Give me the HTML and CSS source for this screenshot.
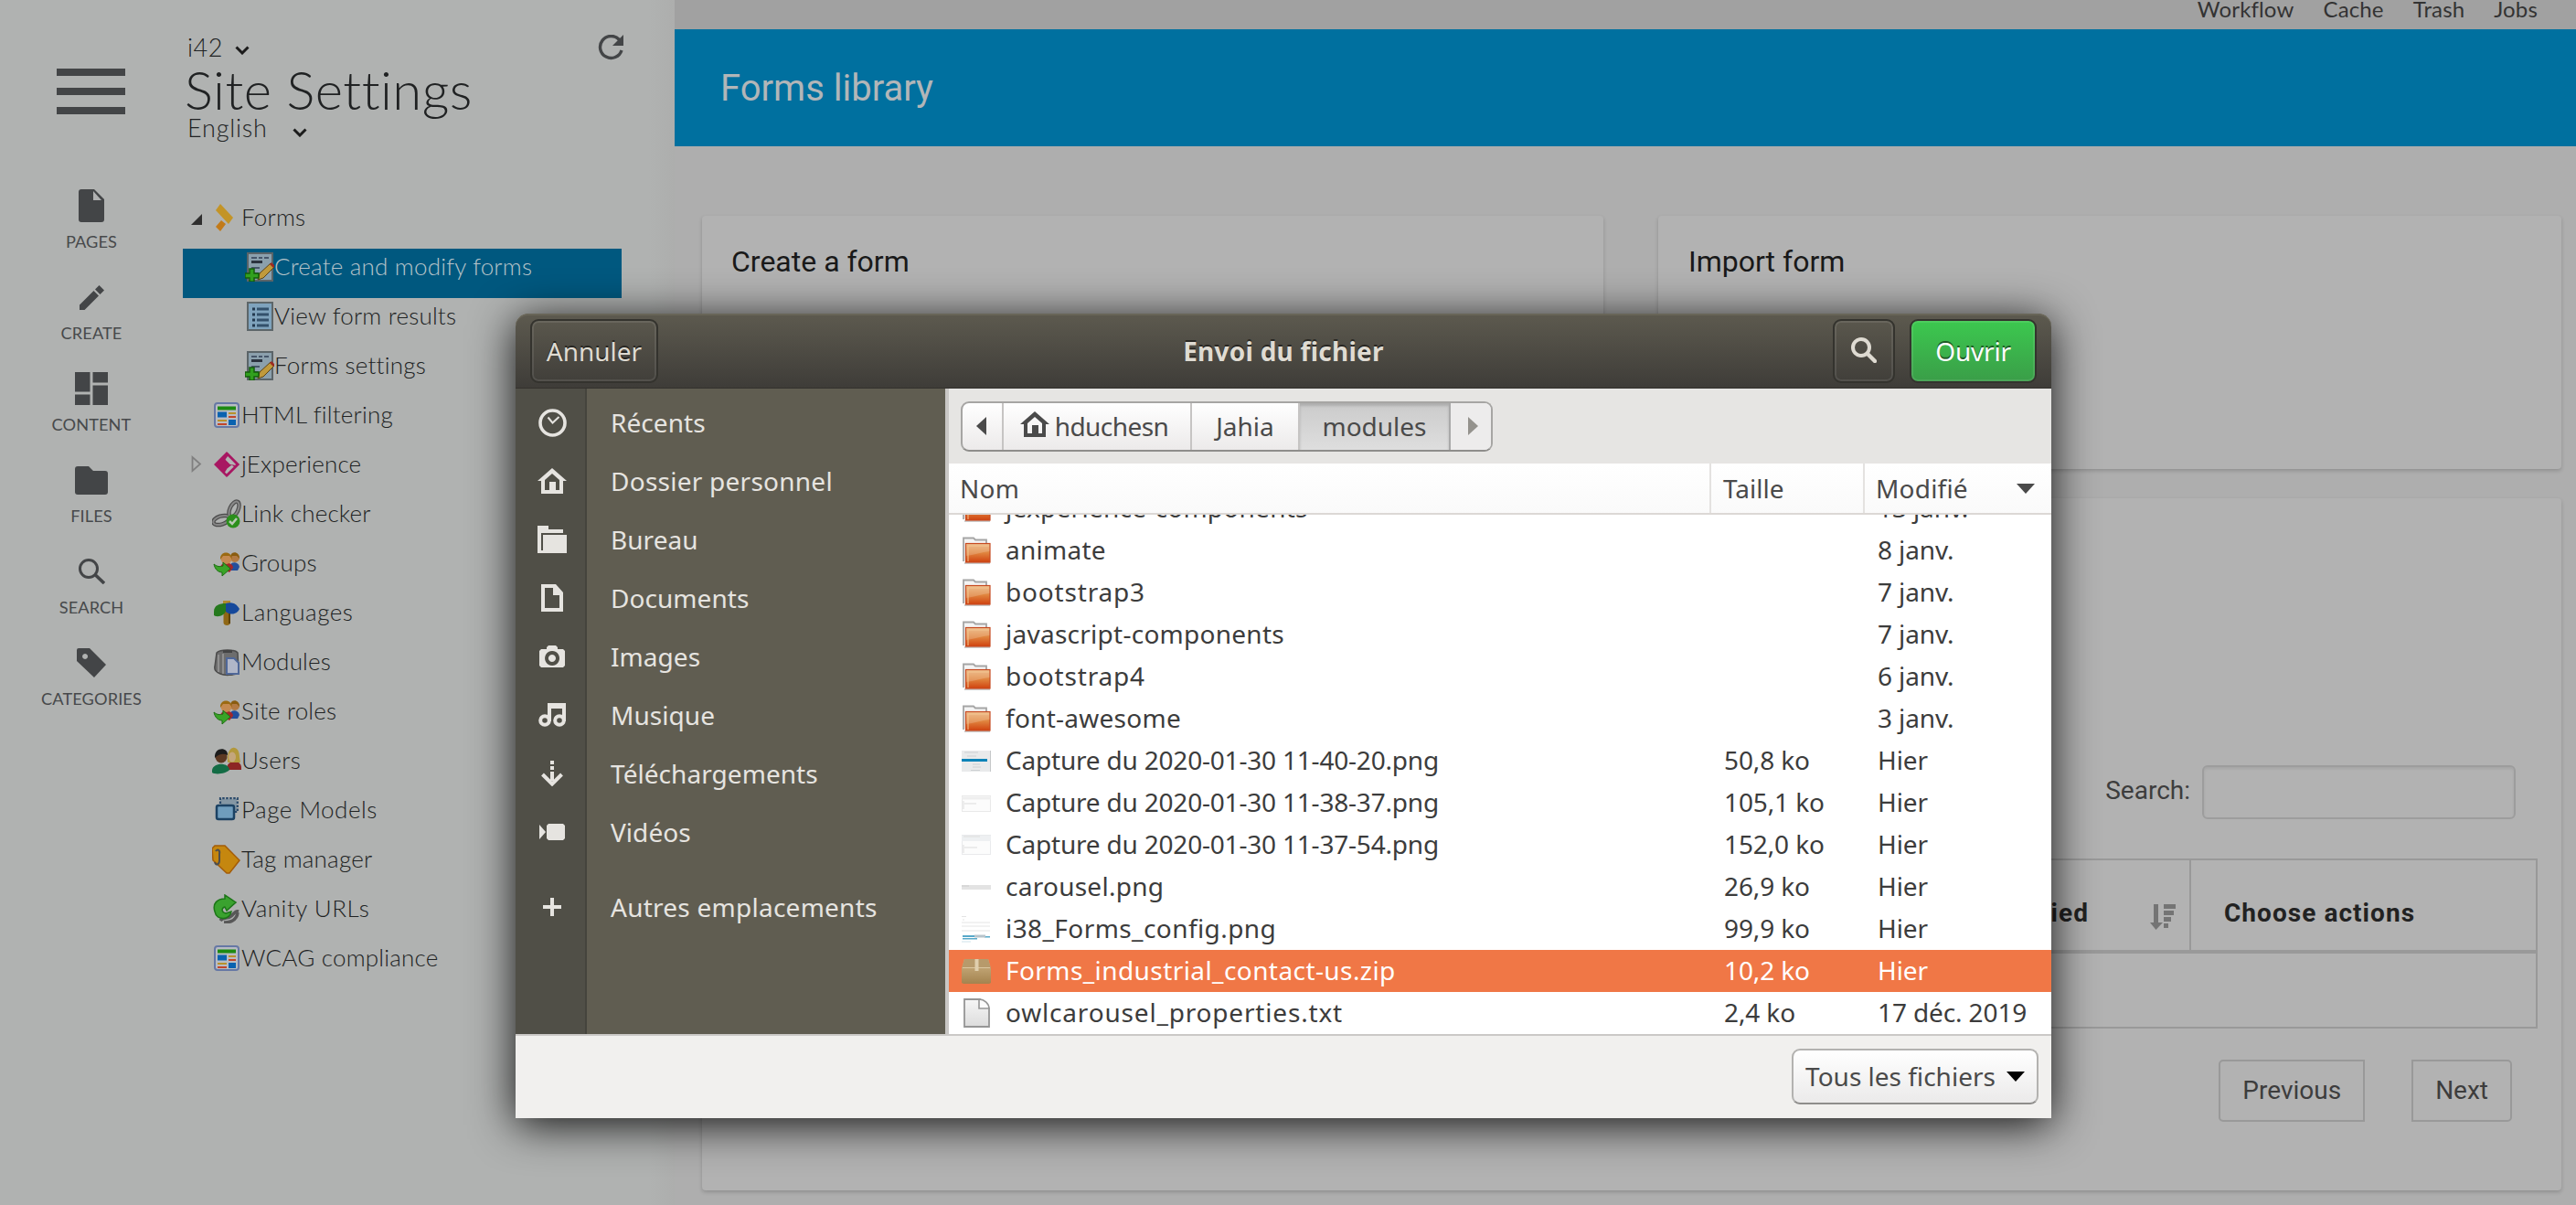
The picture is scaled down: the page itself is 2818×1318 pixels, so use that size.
FILE: index.html
```html
<!DOCTYPE html>
<html lang="en">
<head>
<meta charset="utf-8">
<title>Forms library</title>
<link rel="stylesheet" href="styles.css">
</head>
<body>
<svg class="defs" aria-hidden="true">
  <defs>
    <linearGradient id="g-folder" x1="0" y1="0" x2="0" y2="1"><stop offset="0" stop-color="#e9ae72"/><stop offset=".5" stop-color="#e0853f"/><stop offset="1" stop-color="#d0420f"/></linearGradient>
    <linearGradient id="g-box" x1="0" y1="0" x2="0" y2="1"><stop offset="0" stop-color="#cfb486"/><stop offset="1" stop-color="#a3834f"/></linearGradient>
    <linearGradient id="g-doc" x1="0" y1="0" x2="0" y2="1"><stop offset="0" stop-color="#f6f6f6"/><stop offset="1" stop-color="#dcdcdc"/></linearGradient>
  </defs>
  <symbol id="form-edit" viewBox="0 0 32 32">
    <rect x="3" y="1" width="27" height="30" fill="#8ba0ad" stroke="#5b6468" stroke-width="2"/>
    <path d="M7 6h6M15 6h4M21 6h5M7 17h9M9 23h6" stroke="#46566a" stroke-width="2"/>
    <path d="M7 10.500h12" stroke="#2c3440" stroke-width="3"/>
    <path d="M14 30l2-7L28 12l4 4-12 12z" fill="#c09a3c" stroke="#5d4415"/>
    <path d="M27 13l2-2 4 4-2 2z" fill="#9c2b22"/>
    <path d="M5 18h5v5h5v5h-5v4H5v-4H0v-5h5z" fill="#31a01e" stroke="#145c0c" stroke-width="1.500"/>
  </symbol>
  <symbol id="form-list" viewBox="0 0 32 32">
    <rect x="3" y="1" width="27" height="30" fill="#7fa3bd" stroke="#5d6669" stroke-width="2"/>
    <path d="M13 8h13M13 14h13M13 20h13M13 26h13" stroke="#33506b" stroke-width="3"/>
    <path d="M8 8h3M8 14h3M8 20h3M8 26h3" stroke="#23394f" stroke-width="3"/>
  </symbol>
  <symbol id="layout" viewBox="0 0 32 32">
    <rect x="3" y="3" width="26" height="26" rx="3" fill="#b9bcc3" stroke="#6678a5" stroke-width="2"/>
    <path d="M6 8.500h20" stroke="#1d8a12" stroke-width="4"/>
    <path d="M6 12.500h10v6H6zM18 21h8v6h-8z" fill="#0a62b0"/>
    <path d="M18 14h8M6 22h10" stroke="#b8922c" stroke-width="2"/>
    <path d="M18 18h8M6 26h10" stroke="#c1462a" stroke-width="2"/>
  </symbol>
  <symbol id="jexp" viewBox="0 0 32 32">
    <path fill-rule="evenodd" d="M16 2l14 14-14 14L2 16zM17.500 6.500l-3 4 5 5 6 1.500 1-1zM16.500 20.500l-2.500 4 2.500 2.500 8-8-3-2.500z" fill="#a81762"/>
    <path d="M18 7.500l-3 3.500 5 5 5 0zM17 20.500l-2 3.500 2 2 6.500-7-2-1.500z" fill="#b3b3b3"/>
    <path d="M16 4l12 12-12 12" fill="none" stroke="#a81762" stroke-width="2.500"/>
  </symbol>
  <symbol id="link" viewBox="0 0 32 32">
    <ellipse cx="10" cy="23" rx="9" ry="4.500" fill="none" stroke="#4c4c4c" stroke-width="4.500" transform="rotate(-18 10 23)"/>
    <ellipse cx="24" cy="11" rx="9" ry="4.500" fill="none" stroke="#505050" stroke-width="4.500" transform="rotate(-65 24 11)"/>
    <ellipse cx="10" cy="23" rx="9" ry="4.500" fill="none" stroke="#858585" stroke-width="2" transform="rotate(-18 10 23)"/>
    <ellipse cx="24" cy="11" rx="9" ry="4.500" fill="none" stroke="#898989" stroke-width="2" transform="rotate(-65 24 11)"/>
    <circle cx="23" cy="24" r="7.500" fill="#2b8f1c"/>
    <path d="M19 24l3 3 5-6" fill="none" stroke="#b9c9b5" stroke-width="2.500"/>
  </symbol>
  <symbol id="people" viewBox="0 0 32 32">
    <path d="M20 19c0-5 9-5 10 1l-2 4h-8z" fill="#234f9c"/>
    <circle cx="25" cy="10" r="5" fill="#b37a43"/><path d="M20 11c-1-9 10-9 10 0l-3-3h-5z" fill="#8a5d10"/>
    <path d="M9 21c0-7 14-7 14 0l-4 5z" fill="#a3282a"/>
    <circle cx="15.500" cy="11" r="6" fill="#c58a50"/><path d="M9 12c-1-10 13-10 13 0l-3-4h-7z" fill="#9b6a12"/>
    <path d="M2 17c4 3 6 3 10 2v-4l8 7-9 8v-4c-5 0-8-4-9-9z" fill="#39a427" stroke="#1d6d12"/>
  </symbol>
  <symbol id="signs" viewBox="0 0 32 32">
    <path d="M12 3h8v4h-8z" fill="#b08a2c"/><path d="M12.500 12h7.500v15c0 4-7.500 4-7.500 0z" fill="#8f6715"/><path d="M18 13h2v15h-2z" fill="#5f430b"/>
    <path d="M2 15c0-7 6-9 13-9v8c-1 5-9 8-13 5z" fill="#25791d"/>
    <path d="M15 6c8-2 12 1 15 6-2 5-9 8-15 3z" fill="#16499b"/>
  </symbol>
  <symbol id="module" viewBox="0 0 32 32">
    <path d="M5 6c4-4 20-4 23 0l1 22c-6 3-16 3-20 1-5-2-7-4-6-8z" fill="#6d6d6d" stroke="#4c4c4c" stroke-width="1.500"/>
    <path d="M7 8v19M12 7v22" stroke="#8f8f8f" stroke-width="2"/>
    <path d="M12 3h10v3H12z" fill="#444"/>
    <path d="M16 12h8l5 5v12H16z" fill="#b0b6c8" stroke="#4f6798" stroke-width="2"/>
  </symbol>
  <symbol id="users" viewBox="0 0 32 32">
    <path d="M16 24c1-9 15-10 16-1v3H18z" fill="#8d2524"/>
    <path d="M17 18c-2-20 13-21 13-6l1 6z" fill="#b2983c"/><ellipse cx="22" cy="12" rx="4" ry="5.500" fill="#c4a67c"/>
    <path d="M0 28c-1-10 18-11 19-2-3 4-15 6-19 3z" fill="#136c45"/>
    <circle cx="10" cy="12" r="6.500" fill="#5b3822"/><path d="M3 13c-1-13 15-12 14-3-4-2-9-2-14 3z" fill="#1c1c1c"/>
  </symbol>
  <symbol id="windows" viewBox="0 0 32 32">
    <path d="M9 4h18v15H9z" fill="#8597a4"/>
    <path d="M9 9V3.200h18.800v14.800h-3" fill="none" stroke="#29496a" stroke-width="2.200" stroke-dasharray="2.500 1.500"/>
    <rect x="5" y="11" width="19" height="15" rx="2" fill="#6f9dbd" stroke="#1c4263" stroke-width="2.500"/>
  </symbol>
  <symbol id="tag" viewBox="0 0 32 32">
    <path d="M0 4l3-3h11l16 16-11 14h-3L1 17z" fill="#c5870f" stroke="#a35c09" stroke-width="1.500"/>
    <path d="M4 7c2-3 5-1 4 3v7c0 5-4 6-5 2" fill="none" stroke="#4d4d4d" stroke-width="2"/>
  </symbol>
  <symbol id="vanity" viewBox="0 0 32 32">
    <path d="M13 31c6 0 14-2 15-11M9 29c4-5 8-1 12-5s5-6 8-5" fill="none" stroke="#585858" stroke-width="3.500"/>
    <path d="M14 5V1l12 8-10 9-2-4c-4 1-4 6 1 7l6-2c-1 9-16 11-18 0C0 10 6 5 14 5z" fill="#3aa22f" stroke="#1c7518" stroke-width="1.500"/>
  </symbol>
  <symbol id="forms" viewBox="0 0 32 32">
    <path d="M7 8l5-7 14 15-5 7z" fill="#c39427"/><path d="M7 26l6-7 5 4-6 8z" fill="#c27a18"/>
  </symbol>
  <symbol id="folder" viewBox="0 0 32 32">
    <path d="M2 28V2.500h11l2 2h12v5" fill="#f4f4f4" stroke="#a5a5a5" stroke-width="1.800"/>
    <path d="M3 30h28" stroke="#bbb" stroke-width="1.500"/>
    <rect x="4.500" y="8.500" width="26.500" height="20.500" fill="url(#g-folder)" stroke="#c74a20" stroke-width="1.200"/>
    <path d="M5 9h25.500v8C22 18 13 21 5 22z" fill="#fff" opacity=".18"/>
    <path d="M7 28V11h23" fill="none" stroke="#f3c48f" stroke-width="1"/>
  </symbol>
  <symbol id="home" viewBox="0 0 32 28">
    <path d="M16 0L0 14h4v14h24V14h4zM16 6l8 7v11h-4v-9h-7v9H8V13z" fill="currentColor" fill-rule="evenodd"/>
  </symbol>
  <symbol id="loupe" viewBox="0 0 28 28">
    <circle cx="11" cy="11" r="9" fill="none" stroke="currentColor" stroke-width="4"/><path d="M18 18l8 8" stroke="currentColor" stroke-width="4.500" stroke-linecap="round"/>
  </symbol>
</svg>

<div class="app">
  <nav class="rail">
    <div class="burger"><i></i><i></i><i></i></div>
    <ul class="rail-list">
      <li><span class="rail-icon"><svg width="28" height="36" viewBox="0 0 28 36"><path d="M3 0h14l11 11v22a3 3 0 0 1-3 3H3a3 3 0 0 1-3-3V3a3 3 0 0 1 3-3z"/><path d="M16 2v10h9z" fill="#b0b1b1"/></svg></span>PAGES</li>
      <li><span class="rail-icon"><svg width="27" height="27" viewBox="0 0 27 27"><path d="M0 21.500L15.500 6l5.500 5.500L5.500 27H0zM17 4.500L21.500 0 27 5.500 22.500 10z"/></svg></span>CREATE</li>
      <li><span class="rail-icon"><svg width="36" height="36" viewBox="0 0 36 36"><path d="M0 0h16.500v21.500H0zM0 24.500h16.500V36H0zM19.500 0H36v11.500H19.500zM19.500 14.500H36V36H19.500z"/></svg></span>CONTENT</li>
      <li><span class="rail-icon"><svg width="36" height="31" viewBox="0 0 36 31"><path d="M3 0h12l5 5h13a3 3 0 0 1 3 3v20a3 3 0 0 1-3 3H3a3 3 0 0 1-3-3V3a3 3 0 0 1 3-3z"/></svg></span>FILES</li>
      <li><span class="rail-icon"><svg width="29" height="28" viewBox="0 0 29 28"><circle cx="11" cy="11" r="9.500" fill="none" stroke="#434547" stroke-width="3"/><path d="M18 17.500l10 9.500" stroke="#434547" stroke-width="3.600"/></svg></span>SEARCH</li>
      <li><span class="rail-icon"><svg width="32" height="32" viewBox="0 0 32 32"><path fill-rule="evenodd" d="M2 0h12l18 18-13 14L0 14V2a2 2 0 0 1 2-2zM9 6a3 3 0 1 0 .1 0z"/></svg></span>CATEGORIES</li>
    </ul>
  </nav>

  <aside class="side">
    <header class="site">
      <div class="site-name">i42 <svg width="16" height="10" viewBox="0 0 16 10"><path d="M1.500 1.500L8 8l6.500-6.500"/></svg></div>
      <h1>Site Settings</h1>
      <div class="site-lang">English <svg width="16" height="10" viewBox="0 0 16 10"><path d="M1.500 1.500L8 8l6.500-6.500"/></svg></div>
      <svg class="refresh" width="28" height="28" viewBox="0 0 28 28"><path d="M23.500 5.500A12 12 0 1 0 26 17" fill="none" stroke="#434547" stroke-width="3.400"/><path d="M28 0v12H16z" fill="#434547"/></svg>
    </header>
    <ul class="tree">
      <li class="first"><svg class="twist open" width="12" height="12" viewBox="0 0 12 12"><path d="M12 0v12H0z" fill="#2f2f2f"/></svg><svg class="ico"><use href="#forms"/></svg>Forms</li>
      <li class="sub on"><svg class="ico"><use href="#form-edit"/></svg>Create and modify forms</li>
      <li class="sub"><svg class="ico"><use href="#form-list"/></svg>View form results</li>
      <li class="sub"><svg class="ico"><use href="#form-edit"/></svg>Forms settings</li>
      <li><svg class="ico"><use href="#layout"/></svg>HTML filtering</li>
      <li><svg class="twist" width="12" height="19" viewBox="0 0 12 19"><path d="M1.500 2v15L10 9.500z" fill="none" stroke="#808080" stroke-width="1.800"/></svg><svg class="ico"><use href="#jexp"/></svg>jExperience</li>
      <li><svg class="ico"><use href="#link"/></svg>Link checker</li>
      <li><svg class="ico"><use href="#people"/></svg>Groups</li>
      <li class="roomy"><svg class="ico"><use href="#signs"/></svg>Languages</li>
      <li><svg class="ico"><use href="#module"/></svg>Modules</li>
      <li><svg class="ico"><use href="#people"/></svg>Site roles</li>
      <li class="roomy"><svg class="ico"><use href="#users"/></svg>Users</li>
      <li class="roomy"><svg class="ico"><use href="#windows"/></svg>Page Models</li>
      <li><svg class="ico"><use href="#tag"/></svg>Tag manager</li>
      <li class="roomy"><svg class="ico"><use href="#vanity"/></svg>Vanity URLs</li>
      <li><svg class="ico"><use href="#layout"/></svg>WCAG compliance</li>
    </ul>
  </aside>

  <main class="main">
    <nav class="topbar"><span>Workflow</span><span>Cache</span><span>Trash</span><span>Jobs</span></nav>
    <header class="banner">Forms library</header>
    <div class="cards">
      <section class="card"><h2>Create a form</h2></section>
      <section class="card"><h2>Import form</h2></section>
    </div>
    <section class="card library">
      <div class="search"><label for="q">Search:</label><input id="q" type="text"></div>
      <div class="grid">
        <div class="th modified"><span>Last modified</span><svg width="28" height="28" viewBox="0 0 28 28"><path d="M4 0h5v20h5l-7.500 8L0 20h4zM15 0h13v5H15zM15 7h11v5H15zM15 14h8v5h-8zM15 21h5v5h-5z" fill="#747474"/></svg></div>
        <div class="th">Choose actions</div>
        <div class="td"></div>
      </div>
      <div class="pager"><span class="prev">Previous</span><span class="next">Next</span></div>
    </section>
  </main>
</div>

<div class="dialog" lang="fr">
  <header class="titlebar">
    <div class="left"><span class="btn cancel">Annuler</span></div>
    <h2>Envoi du fichier</h2>
    <div class="right"><span class="btn find"><svg width="28" height="28"><use href="#loupe"/></svg></span><span class="btn open-btn">Ouvrir</span></div>
  </header>
  <div class="panes">
    <ul class="places">
      <li><span><svg width="31" height="31" viewBox="0 0 31 31"><circle cx="15.500" cy="15.500" r="13.500" fill="none" stroke="currentColor" stroke-width="3.600"/><path d="M10.500 9.500l5 6 7-6.500" fill="none" stroke="currentColor" stroke-width="2"/></svg></span>Récents</li>
      <li class="mid"><span><svg width="32" height="28"><use href="#home"/></svg></span>Dossier personnel</li>
      <li><span><svg width="32" height="30" viewBox="0 0 32 30"><path d="M0 30V0h12v4h16v4H4v19h2V10h26v20z" fill="currentColor"/></svg></span>Bureau</li>
      <li><span><svg width="24" height="30" viewBox="0 0 24 30"><path d="M0 0h16l8 9v21H0zM4 4v22h16V12h-7V4z" fill="currentColor" fill-rule="evenodd"/></svg></span>Documents</li>
      <li><span><svg width="28" height="24" viewBox="0 0 28 24"><path fill-rule="evenodd" fill="currentColor" d="M2 4h6V2l2-2h8l2 2v2h6l2 2v16l-2 2H2l-2-2V6zM14 6a8 8 0 1 0 .1 0zM14 10a4 4 0 1 1-.1 0z"/></svg></span>Images</li>
      <li><span><svg width="30" height="26" viewBox="0 0 30 26"><path d="M12 20V2h16v18M12 4h16" fill="none" stroke="currentColor" stroke-width="4"/><circle cx="7" cy="19" r="4.800" fill="none" stroke="currentColor" stroke-width="4"/><circle cx="23" cy="19" r="4.800" fill="none" stroke="currentColor" stroke-width="4"/></svg></span>Musique</li>
      <li><span><svg width="24" height="28" viewBox="0 0 24 28"><path d="M12 0v4M12 6v4M12 12v10" stroke="currentColor" stroke-width="4"/><path d="M1.500 15L12 25.500 22.500 15" fill="none" stroke="currentColor" stroke-width="4"/></svg></span>Téléchargements</li>
      <li><span><svg width="28" height="18" viewBox="0 0 28 18"><path d="M0 1l7 8-7 8zM10 0h16l2 2v14l-2 2H10l-2-2V2z" fill="currentColor"/></svg></span>Vidéos</li>
      <li class="mid other"><span><svg width="20" height="20" viewBox="0 0 20 20"><path d="M8 0h4v8h8v4h-8v8H8v-8H0V8h8z" fill="currentColor"/></svg></span>Autres emplacements</li>
    </ul>
    <section class="browser">
      <div class="pathbar">
        <div class="crumbs">
          <span class="step back"><svg width="11" height="20" viewBox="0 0 11 20"><path d="M11 0v20L0 10z" fill="#4a4a4a"/></svg></span>
          <span class="step user"><svg width="32" height="28"><use href="#home"/></svg>hduchesn</span>
          <span class="step jahia">Jahia</span>
          <span class="step current">modules</span>
          <span class="step fwd"><svg width="11" height="20" viewBox="0 0 11 20"><path d="M0 0v20l11-10z" fill="#94928d"/></svg></span>
        </div>
      </div>
      <div class="row head"><span>Nom</span><span>Taille</span><span class="mod">Modifié<svg width="20" height="11" viewBox="0 0 20 11"><path d="M0 0h20L10 11z" fill="#4a4a4a"/></svg></span></div>
      <div class="files">
        <div class="row"><span><svg class="ico"><use href="#folder"/></svg>jexperience-components</span><span></span><span>13 janv.</span></div>
        <div class="row"><span><svg class="ico"><use href="#folder"/></svg>animate</span><span></span><span>8 janv.</span></div>
        <div class="row"><span class="wide"><svg class="ico"><use href="#folder"/></svg>bootstrap3</span><span></span><span>7 janv.</span></div>
        <div class="row"><span><svg class="ico"><use href="#folder"/></svg>javascript-components</span><span></span><span>7 janv.</span></div>
        <div class="row"><span class="wide"><svg class="ico"><use href="#folder"/></svg>bootstrap4</span><span></span><span>6 janv.</span></div>
        <div class="row"><span><svg class="ico"><use href="#folder"/></svg>font-awesome</span><span></span><span>3 janv.</span></div>
        <div class="row"><span class="tight"><svg class="ico" viewBox="0 0 32 32"><rect y="5" width="32" height="23" fill="#e9eaeb"/><path d="M31.500 5v23" stroke="#c5c7c9"/><rect y="14" width="28" height="3" fill="#0d83b8"/><path d="M3 7h15M6 11h10M12 20h8M12 23h9M10 26.500h10" stroke="#cdd0d2"/></svg>Capture du 2020-01-30 11-40-20.png</span><span>50,8 ko</span><span>Hier</span></div>
        <div class="row"><span class="tight"><svg class="ico" viewBox="0 0 32 32"><rect x=".5" y="8.500" width="31" height="17" fill="#fcfcfc" stroke="#e9e9e9"/><path d="M0 11h32" stroke="#eee" stroke-width="3"/><path d="M2 14v9M3 17h13" stroke="#ddd"/></svg>Capture du 2020-01-30 11-38-37.png</span><span>105,1 ko</span><span>Hier</span></div>
        <div class="row"><span class="tight"><svg class="ico" viewBox="0 0 32 32"><rect x=".5" y="5.500" width="31" height="21" fill="#fcfcfc" stroke="#e9eaec"/><path d="M0 9h32" stroke="#eef0f2" stroke-width="6"/><path d="M2 7h18M2 16v9M3 19h14" stroke="#ddd"/></svg>Capture du 2020-01-30 11-37-54.png</span><span>152,0 ko</span><span>Hier</span></div>
        <div class="row"><span><svg class="ico" viewBox="0 0 32 32"><rect y="14" width="32" height="5" fill="#e3e3e3"/><path d="M0 15h8" stroke="#ccc"/></svg>carousel.png</span><span>26,9 ko</span><span>Hier</span></div>
        <div class="row"><span class="loose"><svg class="ico" viewBox="0 0 32 32"><path d="M0 2.500h5M1 6h2M0 9h31M0 13h31M0 18h31" stroke="#e4e4e4"/><path d="M1 23h15v2H1zM1 26h16v1.500H1zM25 24h6v1.500h-6z" fill="#58a9c9"/><path d="M14 22.500h12v3H14z" fill="#b7c4cb"/><path d="M0 30h10" stroke="#cfe2ea"/></svg>i38_Forms_config.png</span><span>99,9 ko</span><span>Hier</span></div>
        <div class="row picked"><span class="loose"><svg class="ico" viewBox="0 0 32 32"><path d="M3 3h26l3 10v16l-2 1H2l-2-1V13z" fill="url(#g-box)"/><path d="M3 3h26l2.500 9H.5z" fill="#b79a6b"/><path d="M1 12.500h30" stroke="#dcc7a0"/><path d="M14.500 3h4v13h-4z" fill="#e0cfae"/></svg>Forms_industrial_contact-us.zip</span><span>10,2 ko</span><span>Hier</span></div>
        <div class="row"><span class="wide"><svg class="ico" viewBox="0 0 32 32"><path d="M3 1h17l10 10v20H3z" fill="url(#g-doc)" stroke="#969696" stroke-width="1.800"/><path d="M19 1v10h11c0-5-5-10-11-10z" fill="#fbfbfb" stroke="#969696" stroke-width="1.600"/></svg>owlcarousel_properties.txt</span><span>2,4 ko</span><span>17 déc. 2019</span></div>
      </div>
    </section>
  </div>
  <footer class="dialog-foot"><span class="filter">Tous les fichiers<svg width="20" height="11" viewBox="0 0 20 11"><path d="M0 0h20L10 11z"/></svg></span></footer>
</div>
</body>
</html>
```
FILE: styles.css
```css
* { box-sizing: border-box; }
body { margin: 0; width: 2818px; height: 1318px; overflow: hidden; background: #aeaeae; }
ul { list-style: none; margin: 0; padding: 0; }
h1, h2 { margin: 0; font-weight: 400; }
svg { display: block; flex: none; }
.defs { position: absolute; width: 0; height: 0; }
.ico { width: 32px; height: 32px; }

.app { display: flex; height: 1318px; }

/* Icon rail */
.rail { width: 200px; background: #b0b2b1; padding-top: 75px; }
.burger { display: flex; flex-direction: column; justify-content: space-between; width: 75px; height: 50px; margin-left: 62px; }
.burger i { height: 8px; background: #434547; }
.rail-list { margin-top: 75px; }
.rail-list li { height: 100px; display: flex; flex-direction: column; align-items: center; font: 18.200px/28px Lato, sans-serif; letter-spacing: .1px; color: #47494b; }
.rail-icon { height: 50px; display: flex; align-items: center; }
.rail-icon svg { fill: #434547; }

/* Site tree */
.side { width: 538px; background: linear-gradient(to right, #b0b2b1 510px, #adaead); font-family: Lato, sans-serif; font-weight: 300; color: #202223; }
.site { display: grid; grid-template-columns: 452px auto; justify-content: start; padding: 36px 0 0 2px; height: 218px; align-content: start; }
.site > * { grid-column: 1; }
.site-name, .site-lang { display: flex; align-items: center; font-size: 27px; padding-left: 3px; }
.site-name { line-height: 34px; height: 32px; gap: 13px; letter-spacing: .5px; }
.site-name svg { margin-top: 6px; }
.site-lang { line-height: 26px; letter-spacing: .8px; gap: 27px; }
.site-lang svg { margin-top: 10px; }
.site-name path, .site-lang path { fill: none; stroke: #1c1c1c; stroke-width: 3; }
.site h1 { font-size: 58px; line-height: 59px; font-weight: 300; letter-spacing: .45px; }
.site .refresh { grid-column: 2; grid-row: 1; margin-top: 2px; }
.tree li { height: 54px; width: 480px; padding-left: 32px; display: flex; align-items: flex-start; font-size: 26px; line-height: 38px; letter-spacing: .2px; white-space: nowrap; }
.tree li.sub { padding-left: 68px; }
.tree li.first { padding-left: 29px; }
.tree li.on { background: #00587f; color: #b6c3c9; }
.tree li.roomy { letter-spacing: .5px; }
.tree .ico { margin-top: 4px; }
.twist { margin: 10px 11px 0 -23px; }
.twist.open { margin: 16px 11px 0 -20px; }
.first .twist + .ico { margin-left: -3px; margin-right: 3px; }

/* Main area */
.main { flex: 1; font-family: Roboto, sans-serif; }
.topbar { height: 32px; background: #a1a1a1; display: flex; justify-content: flex-end; gap: 32px; padding-right: 42px; font: 24px/20px Lato, sans-serif; letter-spacing: .15px; color: #333; }
.banner { height: 128px; background: #00709f; color: #b2b6b8; font-size: 40px; line-height: 129px; padding-left: 50px; }
.cards { display: grid; grid-template-columns: 986px 988px; gap: 60px; padding: 76px 16px 0 30px; }
.card { background: #b2b2b2; border-radius: 4px; box-shadow: 0 2px 4px rgba(0,0,0,.18); }
.cards .card { height: 277px; padding: 30px 32px; }
.cards .card + .card { padding-left: 33px; }
.card h2 { font-size: 32px; line-height: 40px; color: #191919; }
.library { margin: 32px 16px 0 30px; height: 757px; padding: 292px 26px 0; font-size: 28px; color: #3d3d3d; }
.search { display: flex; justify-content: flex-end; gap: 13px; padding-right: 24px; }
.search label { line-height: 55px; }
.search input { width: 343px; height: 59px; margin: 0; border: 2px solid #9d9d9d; border-radius: 6px; background: #b2b2b2; box-shadow: inset 0 2px 3px rgba(0,0,0,.07); }
.grid { display: grid; grid-template-columns: 1fr 377px; grid-template-rows: 98px 1fr; margin-top: 43px; height: 186px; border: 2px solid #999; }
.th { padding: 39px 36px 0; font-weight: 700; line-height: 38px; letter-spacing: 1.050px; color: #222; box-shadow: 0 4px 0 #999; }
.th.modified { display: flex; justify-content: flex-end; gap: 67px; padding-right: 15px; border-right: 2px solid #999; }
.th svg { margin-top: 9px; }
.td { grid-column: 1 / -1; }
.pager { display: flex; justify-content: flex-end; gap: 51px; margin-top: 34px; padding-right: 28px; }
.pager span { height: 68px; line-height: 64px; border: 2px solid #999; padding: 0 24px; }
.prev { border-radius: 5px 0 0 5px; }
.next { border-radius: 0 5px 5px 0; }

/* File chooser window */
.dialog { position: absolute; left: 564px; top: 343px; width: 1680px; height: 880px; border-radius: 14px 14px 0 0; box-shadow: 0 7px 48px rgba(0,0,0,.9); font: 28px/45px "Noto Sans", "Open Sans", sans-serif; color: #3c3c3c; background: #f1f0ee; }
.titlebar { height: 82px; display: grid; grid-template-columns: 1fr auto 1fr; padding: 6px 16px 0 16px; border-radius: 14px 14px 0 0; background: linear-gradient(#5d5a4f, #3e3c38); box-shadow: inset 0 2px 0 #686558, inset 0 -1px 0 #33312d; color: #dfdbd2; text-shadow: 0 -2px 0 rgba(0,0,0,.5); }
.titlebar h2 { font-size: 28px; font-weight: 700; line-height: 70px; letter-spacing: .25px; }
.titlebar .right { display: flex; justify-content: flex-end; gap: 16px; }
.btn { display: inline-flex; justify-content: center; align-items: center; height: 70px; border: 2px solid #34332e; border-radius: 9px; box-shadow: inset 0 0 0 2px rgba(255,255,255,.09); }
.cancel { width: 140px; }
.find { width: 68px; }
.find svg { margin-top: -3px; }
.open-btn { width: 139px; letter-spacing: -.2px; background: linear-gradient(#3cc84f, #3a9e48); color: #fff; }
.panes { display: flex; height: 706px; }
.places { width: 474px; padding-top: 5px; border-right: 4px solid #c9c7c5; background: linear-gradient(to right, #504f47 76px, #45443d 76px, #45443d 78px, #605d51 78px); color: #e6e4e0; }
.places li { display: flex; height: 64px; line-height: 64px; letter-spacing: .05px; }
.places li span { width: 80px; margin-right: 24px; display: flex; align-items: center; justify-content: center; }
.places li.mid { letter-spacing: .25px; }
.places .other { margin-top: 18px; }
.browser { flex: 1; background: #fff; display: flex; flex-direction: column; }
.pathbar { height: 82px; background: #e6e5e3; padding: 14px 13px; }
.crumbs { display: flex; width: 582px; height: 55px; line-height: 50px; border: 2px solid #a6a5a3; border-bottom-color: #8e8d8b; border-radius: 9px; background: linear-gradient(#fff, #eceaea); overflow: hidden; color: #4a4a4a; }
.step { display: flex; align-items: center; justify-content: center; padding-bottom: 1px; border-right: 2px solid #c6c4c3; }
.back { width: 45px; padding-right: 3px; }
.user { width: 206px; gap: 6px; letter-spacing: -.55px; padding-right: 6px; }
.user svg { margin-bottom: 4px; }
.jahia { width: 118px; }
.current { width: 165px; background: linear-gradient(#cbcbcb, #dedede); box-shadow: inset 0 3px 3px rgba(0,0,0,.15); border-right-color: #a9a9a9; }
.fwd { flex: 1; border: 0; background: #edecec; padding-left: 4px; }
.row { display: grid; grid-template-columns: 834px 168px 1fr; height: 46px; }
.row > span { padding-left: 14px; white-space: nowrap; }
.row > span:first-child { display: flex; height: 45px; align-items: center; gap: 16px; padding-left: 14px; letter-spacing: .26px; }
.files .row > span.wide { letter-spacing: .82px; }
.files .row > span.tight { letter-spacing: -.2px; }
.files .row > span.loose { letter-spacing: .42px; }
.head { height: 56px; line-height: 54px; border-bottom: 2px solid #dcd8d5; background: linear-gradient(#fff, #fafafa); color: #4a4a4a; }
.head > span, .row.head > span:first-child { height: 54px; border-right: 2px solid #e4e2e0; }
.row.head > span:first-child { padding-left: 12px; }
.head > span + span { padding-left: 13px; }
.row.head .mod { display: flex; justify-content: space-between; align-items: center; padding: 0 18px 0 12px; border: 0; letter-spacing: .2px; }
.files { flex: 1; overflow: hidden; min-height: 0; }
.files .row:first-child { margin-top: -30px; }
.files .row > span + span { letter-spacing: -.12px; }
.picked { background: #f07746; color: #fff; }
.dialog-foot { height: 92px; border-top: 2px solid #cbc9c7; display: flex; justify-content: flex-end; padding: 14px 14px 0 0; }
.filter { width: 270px; height: 61px; line-height: 57px; display: flex; align-items: center; justify-content: center; gap: 12px; border: 2px solid #b3b2b0; border-bottom-color: #8e8d8b; border-radius: 9px; background: linear-gradient(#fff, #ebeaea); color: #4a4a4a; }
```
